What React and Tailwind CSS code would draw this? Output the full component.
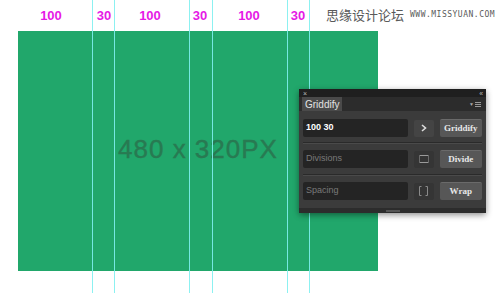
import React from "react";

const guides = [92, 114, 189, 212, 287, 309];

const labels = [
  { text: "100", w: "w-[74px]" },
  { text: "30", w: "w-[32px]" },
  { text: "100", w: "w-[60px]" },
  { text: "30", w: "w-[40px]" },
  { text: "100", w: "w-[58px]" },
  { text: "30", w: "w-[40px]" },
];

function Panel() {
  return (
    <div className="absolute left-[299px] top-[89px] w-[187px] h-[124px] bg-[#3b3b3b] rounded-[2px] shadow-[0_2px_6px_rgba(0,0,0,0.45)] flex flex-col font-['Liberation_Sans',sans-serif]">
      {/* title bar */}
      <div className="h-[8px] bg-[#1f1f1f] flex items-center justify-between px-[4px] text-[#bbb] text-[7px] leading-none">
        <span>×</span>
        <span className="tracking-[-1px]">‹‹</span>
      </div>
      {/* tab row */}
      <div className="h-[14px] bg-[#2c2c2c] flex items-end justify-between pl-[3px] pr-[5px]">
        <div className="h-[14px] px-[3px] bg-[#4a4a4a] text-[#e2e2e2] text-[10px] flex items-center">
          Griddify
        </div>
        <div className="flex items-center gap-[1px] pb-[4px]">
          <span className="text-[#aaa] text-[5px] leading-none">▼</span>
          <div className="flex flex-col gap-[1px]">
            <div className="w-[6px] h-[1px] bg-[#999]" />
            <div className="w-[6px] h-[1px] bg-[#999]" />
            <div className="w-[6px] h-[1px] bg-[#999]" />
          </div>
        </div>
      </div>
      {/* rows */}
      <div className="flex flex-col px-[4px] pt-[8px]">
        <div className="flex items-center h-[18px]">
          <div className="w-[106px] h-[18px] bg-[#242424] rounded-[2px] flex items-center px-[3px] text-white text-[9px] font-bold">
            100 30
          </div>
          <div className="ml-[6px] w-[20px] h-[17px] bg-[#444] rounded-[2px] flex items-center justify-center">
            <svg width="6" height="8" viewBox="0 0 6 8">
              <path d="M1 1 L4.5 4 L1 7" stroke="#ddd" strokeWidth="1.6" fill="none" />
            </svg>
          </div>
          <div className="ml-[6px] w-[43px] h-[18px] bg-[#575757] rounded-[2px] border-t border-[#6a6a6a] flex items-center justify-center text-[#e8e8e8] text-[9px] font-bold font-['Liberation_Serif',serif]">
            Griddify
          </div>
        </div>
        <div className="mt-[5px] border-t border-[#2a2a2a] border-b-[#4a4a4a] border-b" />
        <div className="mt-[6px] flex items-center h-[18px]">
          <div className="w-[106px] h-[18px] bg-[#242424] rounded-[2px] flex items-center px-[3px] text-[#7a7a7a] text-[9px]">
            Divisions
          </div>
          <div className="ml-[6px] w-[20px] h-[17px] bg-[#353535] rounded-[2px] flex items-center justify-center">
            <svg width="10" height="8" viewBox="0 0 10 8">
              <path d="M0.5 0.5 H9.5 M0.5 7.5 H9.5" stroke="#9a9a9a" strokeWidth="1" fill="none" />
              <path d="M0.5 0.5 V7.5 M9.5 0.5 V7.5" stroke="#6a6a6a" strokeWidth="1" fill="none" />
            </svg>
          </div>
          <div className="ml-[6px] w-[43px] h-[18px] bg-[#575757] rounded-[2px] border-t border-[#6a6a6a] flex items-center justify-center text-[#e8e8e8] text-[9px] font-bold font-['Liberation_Serif',serif]">
            Divide
          </div>
        </div>
        <div className="mt-[6px] border-t border-[#2a2a2a] border-b-[#4a4a4a] border-b" />
        <div className="mt-[6px] flex items-center h-[18px]">
          <div className="w-[106px] h-[18px] bg-[#242424] rounded-[2px] flex items-center px-[3px] text-[#7a7a7a] text-[9px]">
            Spacing
          </div>
          <div className="ml-[6px] w-[20px] h-[17px] bg-[#353535] rounded-[2px] flex items-center justify-center">
            <svg width="9" height="10" viewBox="0 0 9 10">
              <path d="M2.5 0.5 H0.5 V9.5 H2.5 M6.5 0.5 H8.5 V9.5 H6.5" stroke="#8a8a8a" strokeWidth="1" fill="none" />
            </svg>
          </div>
          <div className="ml-[6px] w-[43px] h-[18px] bg-[#575757] rounded-[2px] border-t border-[#6a6a6a] flex items-center justify-center text-[#e8e8e8] text-[9px] font-bold font-['Liberation_Serif',serif]">
            Wrap
          </div>
        </div>
      </div>
      {/* bottom bar */}
      <div className="mt-auto h-[5px] bg-[#2c2c2c] flex items-center justify-center">
        <div className="w-[14px] h-[2px] bg-[#555]" />
      </div>
    </div>
  );
}

export default function App() {
  return (
    <div className="relative w-[500px] h-[293px] bg-white overflow-hidden font-['Liberation_Sans',sans-serif]">
      {/* labels + watermark */}
      <div className="h-[31px] flex items-center pl-[14px]">
        {labels.map((l, i) => (
          <div key={i} className={`${l.w} text-center text-[13px] font-bold text-[#e619e6]`}>
            {l.text}
          </div>
        ))}
        <div className="ml-[8px] mb-[2px] flex items-center gap-[6px] text-[#5a5a5a]">
          <span className="text-[13px] font-['Noto_Sans_CJK_SC',sans-serif]">思缘设计论坛</span>
          <span className="text-[8px] tracking-[0.5px] font-['DejaVu_Sans_Mono',monospace]">WWW.MISSYUAN.COM</span>
        </div>
      </div>

      {/* artboard */}
      <div className="ml-[18px] w-[360px] h-[240px] bg-[#21a76b] flex items-center justify-center">
        <span className="text-[26px] tracking-[1px] text-[#287a52] -mt-[4px] [-webkit-text-stroke:0.4px_#287a52]">480 x 320PX</span>
      </div>

      {/* guides */}
      {guides.map((x) => (
        <div
          key={x}
          className="absolute top-0 h-[293px] w-[1px] bg-[#7ff0f0] opacity-90"
          style={{ left: x }}
        />
      ))}

      <Panel />
    </div>
  );
}
